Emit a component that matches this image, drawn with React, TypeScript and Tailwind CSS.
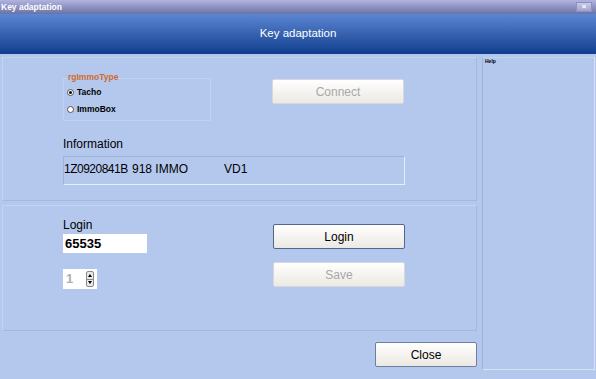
import React from "react";

const font = { fontFamily: '"Liberation Sans", Arial, sans-serif' };

function Btn({ label, disabled, strong }: { label: string; disabled?: boolean; strong?: boolean }) {
  return (
    <div
      className={
        "flex items-center justify-center w-[132px] h-[25px] rounded-[2px] bg-gradient-to-b from-[#ffffff] to-[#ece9e3] text-[12px] " +
        (disabled
          ? "border border-[#d6d8de] text-[#a8a8a8]"
          : strong
          ? "border border-[#4f6690] text-black"
          : "border border-[#6f7f9f] text-black")
      }
    >
      {label}
    </div>
  );
}

export default function App() {
  return (
    <div className="w-[596px] h-[379px] bg-[#b4c8ee] flex flex-col overflow-hidden" style={font}>
      {/* title bar */}
      <div className="h-[14px] bg-gradient-to-b from-[#b1b4e0] to-[#6b72a4] flex items-center justify-between pl-[1px] pr-[4px]">
        <span className="text-[8.5px] font-bold text-white leading-none">Key adaptation</span>
        <div className="w-[16px] h-[10px] bg-gradient-to-b from-[#c9cbe6] to-[#9ea3cf] border border-[#8c92c0] flex items-center justify-center text-white text-[8px] leading-none font-bold">
          ×
        </div>
      </div>
      {/* header */}
      <div className="h-[40px] bg-gradient-to-b from-[#5c86d2] to-[#0f3e8e] flex items-center justify-center">
        <span className="text-[11.5px] text-white">Key adaptation</span>
      </div>
      {/* body */}
      <div className="flex pt-[3px] pl-[2px]">
        <div className="flex flex-col w-[475px]">
          {/* top panel */}
          <div className="h-[144px] border border-t-[#c4d3f1] border-l-[#c4d3f1] border-r-[#a3b7df] border-b-[#a3b7df] relative">
            <div className="flex pl-[60px] pt-[20px]">
              <div className="w-[148px] h-[43px] border border-[#c2d1f0] relative pt-[7px] pl-[3px]">
                <span className="absolute left-[3px] top-[-8px] text-[8.5px] font-bold text-[#d26a2c] bg-[#b4c8ee] px-[1px]">
                  rgImmoType
                </span>
                <div className="flex items-center gap-[3px] h-[12px]">
                  <div className="w-[7px] h-[7px] rounded-full border border-[#555] bg-white flex items-center justify-center">
                    <div className="w-[3px] h-[3px] rounded-full bg-black" />
                  </div>
                  <span className="text-[8.5px] font-bold text-black">Tacho</span>
                </div>
                <div className="flex items-center gap-[3px] h-[12px] mt-[5px]">
                  <div className="w-[7px] h-[7px] rounded-full border border-[#555] bg-white" />
                  <span className="text-[8.5px] font-bold text-black">ImmoBox</span>
                </div>
              </div>
              <div className="ml-[61px] mt-[1px]">
                <Btn label="Connect" disabled />
              </div>
            </div>
            <div className="pl-[60px] mt-[17px] text-[12px] text-black leading-none">Information</div>
            <div className="ml-[60px] mt-[6px] w-[342px] h-[29px] border border-t-[#9fb2d8] border-l-[#9fb2d8] border-r-[#e6eefc] border-b-[#e6eefc] text-[12px] text-black flex items-start pt-[3px]">
              <span className="w-[68px] tracking-[-0.5px]">1Z0920841B</span>
              <span className="w-[92px]">918 IMMO</span>
              <span>VD1</span>
            </div>
          </div>
          {/* bottom panel */}
          <div className="mt-[4px] h-[126px] border border-t-[#c4d3f1] border-l-[#c4d3f1] border-r-[#a3b7df] border-b-[#a3b7df] flex pl-[60px] pt-[13px]">
            <div className="flex flex-col w-[210px]">
              <span className="text-[12px] text-black leading-none">Login</span>
              <div className="mt-[3px] w-[84px] h-[19px] bg-white flex items-center pl-[2px] text-[13px] font-bold text-black">
                65535
              </div>
              <div className="mt-[16px] w-[34px] h-[20px] bg-white flex items-center justify-between pl-[3px] pr-[3px]">
                <span className="text-[13px] font-bold text-[#b0b0b0]">1</span>
                <div className="flex flex-col w-[8px] h-[16px] border border-[#8a8a8a] rounded-[2px] bg-[#e8e8e8]">
                  <div className="flex-1 flex items-center justify-center border-b border-[#8a8a8a]">
                    <div className="w-0 h-0 border-l-[2px] border-r-[2px] border-b-[3px] border-l-transparent border-r-transparent border-b-black" />
                  </div>
                  <div className="flex-1 flex items-center justify-center">
                    <div className="w-0 h-0 border-l-[2px] border-r-[2px] border-t-[3px] border-l-transparent border-r-transparent border-t-black" />
                  </div>
                </div>
              </div>
            </div>
            <div className="flex flex-col gap-[13px] pt-[5px]">
              <Btn label="Login" strong />
              <Btn label="Save" disabled />
            </div>
          </div>
          <div className="flex justify-end mt-[11px]">
            <div className="flex items-center justify-center w-[102px] h-[25px] rounded-[2px] bg-gradient-to-b from-[#ffffff] to-[#ece9e3] border border-[#6f7f9f] text-[12px] text-black">
              Close
            </div>
          </div>
        </div>
        {/* help panel */}
        <div className="ml-[5px] w-[113px] h-[313px] border border-l-[#9fb2d8] border-t-[#c4d3f1] border-r-[#d6e1f6] border-b-[#d6e1f6] pl-[2px] pt-[1px]">
          <span className="text-[5px] font-bold text-black leading-none block">Help</span>
        </div>
      </div>
    </div>
  );
}
